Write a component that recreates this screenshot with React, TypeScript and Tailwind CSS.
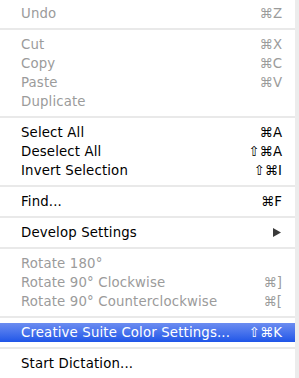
type Item = {
  label: string;
  shortcut?: string;
  disabled?: boolean;
  submenu?: boolean;
  active?: boolean;
};

// groups are split by a separator
const groups: Item[][] = [
  [{ label: 'Undo', shortcut: '⌘Z', disabled: true }],
  [
    { label: 'Cut', shortcut: '⌘X', disabled: true },
    { label: 'Copy', shortcut: '⌘C', disabled: true },
    { label: 'Paste', shortcut: '⌘V', disabled: true },
    { label: 'Duplicate', disabled: true },
  ],
  [
    { label: 'Select All', shortcut: '⌘A' },
    { label: 'Deselect All', shortcut: '⇧⌘A' },
    { label: 'Invert Selection', shortcut: '⇧⌘I' },
  ],
  [{ label: 'Find...', shortcut: '⌘F' }],
  [{ label: 'Develop Settings', submenu: true }],
  [
    { label: 'Rotate 180°', disabled: true },
    { label: 'Rotate 90° Clockwise', shortcut: '⌘]', disabled: true },
    { label: 'Rotate 90° Counterclockwise', shortcut: '⌘[', disabled: true },
  ],
  [{ label: 'Creative Suite Color Settings...', shortcut: '⇧⌘K', active: true }],
  [{ label: 'Start Dictation...' }],
];

function MenuRow({ item }: { item: Item }) {
  const color = item.active
    ? 'text-white'
    : item.disabled
      ? 'text-[#9b9b9b]'
      : 'text-black';
  return (
    <div
      className={`flex items-center justify-between h-[19px] pl-[21px] pr-[13px] ${color} ${
        item.active ? 'bg-gradient-to-b from-[#6c8cf0] to-[#1f55e8]' : ''
      }`}
    >
      <span className="tracking-[0.15px]">{item.label}</span>
      {item.submenu ? (
        <svg width="8" height="9" viewBox="0 0 8 9" className="mr-[1px]">
          <path d="M0 0 L8 4.5 L0 9 Z" fill="#3a3a3a" />
        </svg>
      ) : (
        <span>{item.shortcut}</span>
      )}
    </div>
  );
}

export default function App() {
  return (
    <div className="flex w-[299px] h-[378px] bg-white overflow-hidden">
      <div
        className="flex-1 pt-[4px] text-[13.3px] leading-[19px]"
        style={{ fontFamily: '"DejaVu Sans", sans-serif' }}
      >
        {groups.map((group, gi) => (
          <div key={gi}>
            {gi > 0 && (
              <div className="py-[5px]">
                <div className="h-[2px] bg-[#e9e9e9]" />
              </div>
            )}
            {group.map((item) => (
              <MenuRow key={item.label} item={item} />
            ))}
          </div>
        ))}
      </div>
      <div className="w-[4px] bg-[#ececec]" />
    </div>
  );
}
